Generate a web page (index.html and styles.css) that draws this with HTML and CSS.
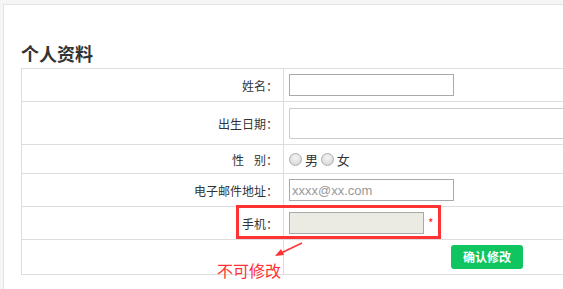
FILE: index.html
```html
<!DOCTYPE html>
<html lang="zh-CN">
<head>
	<meta charset="UTF-8">
	<title>个人资料</title>
	<link rel="stylesheet" href="styles.css">
</head>
<body>
	<div class="main">
		<h2 class="title">个人资料</h2>
		<table class="info">
			<colgroup><col class="c1"><col class="c2"></colgroup>
			<tr class="r1">
				<td class="lab">姓名：</td>
				<td class="val"><input type="text" class="txt"></td>
			</tr>
			<tr class="r2">
				<td class="lab">出生日期：</td>
				<td class="val"><div class="date"></div></td>
			</tr>
			<tr class="r3">
				<td class="lab">性<span class="gap"></span>别：</td>
				<td class="val">
					<span class="radio"></span><span class="rtxt">男</span>
					<span class="radio"></span><span class="rtxt">女</span>
				</td>
			</tr>
			<tr class="r4">
				<td class="lab">电子邮件地址：</td>
				<td class="val"><input type="text" class="txt" placeholder="xxxx@xx.com"></td>
			</tr>
			<tr class="r5">
				<td class="lab">手机：</td>
				<td class="val"><input type="text" class="txt phone" disabled><span class="star">*</span></td>
			</tr>
			<tr class="r6">
				<td></td>
				<td class="val"><a class="btn">确认修改</a></td>
			</tr>
		</table>
	</div>

	<!--标注-->
	<div class="mark-box"></div>
	<svg class="mark-arrow" width="40" height="20" viewBox="0 0 40 20">
		<line x1="29" y1="2" x2="6" y2="13" stroke="#f33" stroke-width="1.5"/>
		<polygon points="2,15 8,8 11,14" fill="#f33"/>
	</svg>
	<div class="mark-text">不可修改</div>
</body>
</html>
```

FILE: styles.css
```css
*{
	margin:0px;
	padding:0px;
}
html,body{
	height:100%;
}
body{
	position:relative;
	background:#f5f5f5;
	overflow:hidden;
	font-family:"Noto Sans CJK SC","Liberation Sans",sans-serif;
	font-size:12px;
	color:#333;
}

.main{
	margin:4px 0 0 3px;
	height:calc(100% - 5px);
	overflow:hidden;
	background:#fff;
	border-top:1px solid #e3e3e3;
	border-left:1px solid #e3e3e3;
	padding-left:17px;
}
.title{
	font-size:18px;
	font-weight:bold;
	line-height:24px;
	padding-top:36px;
	margin-bottom:3px;
	color:#333;
}

.info{
	width:543px;
	table-layout:fixed;
	border-collapse:collapse;
}
.info col.c1{
	width:262px;
}
.info td{
	border:1px solid #ddd;
	padding:0;
	vertical-align:middle;
}
.info td.lab{
	text-align:right;
	padding-right:5px;
}
.info td.val{
	padding-left:5px;
}
.r1 td{height:32px}
.r2 td{height:42px}
.r3 td{height:28px}
.r4 td{height:32px}
.r5 td{height:32px}
.r6 td{height:34px}

.gap{
	display:inline-block;
	width:10px;
}

.txt{
	display:block;
	width:165px;
	height:22px;
	border:1px solid #a9a9a9;
	box-sizing:border-box;
	padding:0 2px;
	font-family:"Liberation Sans",sans-serif;
	font-size:13px;
	background:#fff;
}
.txt::placeholder{
	color:#999;
}
.txt.phone{
	display:inline-block;
	vertical-align:middle;
	width:135px;
	background:#ebebe4;
}
.star{
	display:inline-block;
	vertical-align:middle;
	margin-left:4px;
	color:#f22;
	font-size:12px;
	line-height:12px;
}

.date{
	width:274px;
	height:31px;
	box-sizing:border-box;
	border:1px solid #ccc;
	border-right:none;
	border-radius:2px 0 0 2px;
}

.radio{
	display:inline-block;
	vertical-align:middle;
	width:11px;
	height:11px;
	border:1px solid #b0b0b0;
	border-radius:50%;
	background:radial-gradient(circle at 50% 35%,#f4f4f4 0%,#dcdcdc 70%,#cfcfcf 100%);
	margin-right:3px;
}
.rtxt{
	vertical-align:middle;
	font-size:13px;
	margin-right:0;
}

.btn{
	display:inline-block;
	margin-left:162px;
	width:72px;
	height:24px;
	line-height:24px;
	text-align:center;
	background:#10c55f;
	color:#fff;
	font-weight:bold;
	font-size:12px;
	border-radius:3px;
}

/*标注*/
.mark-box{
	position:absolute;
	left:236px;
	top:205px;
	width:205px;
	height:34px;
	box-sizing:border-box;
	border:3px solid #f33;
}
.mark-arrow{
	position:absolute;
	left:273px;
	top:241px;
}
.mark-text{
	position:absolute;
	left:217px;
	top:259px;
	color:#f33;
	font-size:16px;
	line-height:22px;
}
```
